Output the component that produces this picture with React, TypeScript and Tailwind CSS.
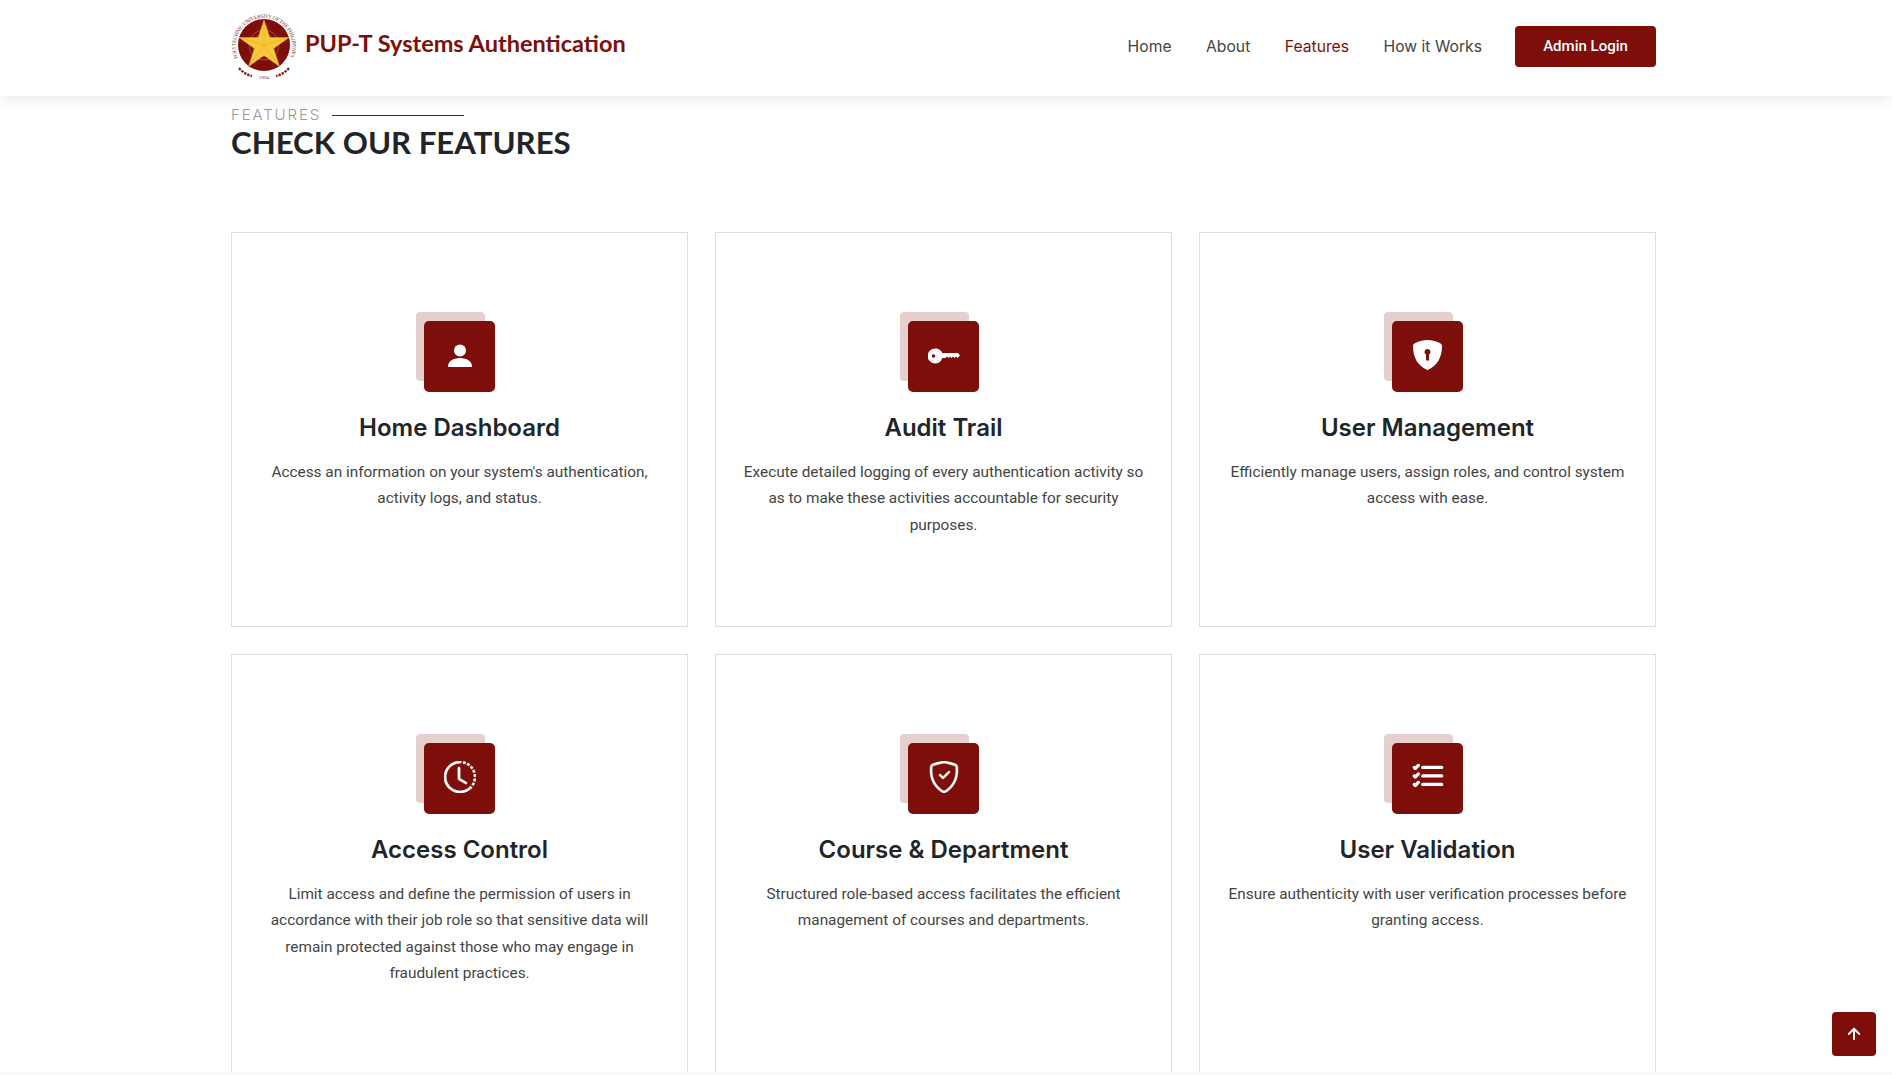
import React from 'react';
import { BsClockHistory, BsListCheck, BsShieldCheck } from 'react-icons/bs';
import { ArrowUp } from 'lucide-react';

function UserIcon() {
  return (
    <svg width="24" height="24" viewBox="0 0 24 24" fill="white" className="-mt-[3px]">
      <circle cx="12" cy="7.500" r="6" />
      <path d="M0 23.500c0-5 5-8.500 12-8.500s12 3.500 12 8.500c0 .3-.2.500-.5.500H.5c-.3 0-.5-.2-.5-.5z" />
    </svg>
  );
}

function KeyIcon() {
  return (
    <svg width="32" height="16" viewBox="0 0 32 16" fill="white" className="-mt-[2px]">
      <path
        fillRule="evenodd"
        d="M7.500 0.500a7.500 7.500 0 0 1 6.800 4.500H30l2 2.500-2.500 2.500-1.500-1.500-1.500 1.500-1.500-1.500-1.500 1.500-1.500-1.500-1.500 1.500-1.500-1.500-1.500 1.500h-3.200A7.500 7.500 0 1 1 7.500 0.500zM5.500 6.200a1.800 1.800 0 1 0 0 3.600 1.800 1.800 0 0 0 0-3.600z"
      />
    </svg>
  );
}

function ShieldKeyIcon() {
  return (
    <svg width="29" height="30" viewBox="0 0 29 30" fill="white" className="-mt-[3px]">
      <path
        fillRule="evenodd"
        d="M14.500 0C19 0 24 1.500 27.500 3.500c1 .6 1.500 1.400 1.500 2.500 0 11-4.500 20-14.500 24C4.500 26 0 17 0 6c0-1.100.5-1.900 1.500-2.500C5 1.500 10 0 14.500 0zM14.500 9a3 3 0 0 0-1.500 5.600V20.500h3v-5.900A3 3 0 0 0 14.500 9z"
      />
    </svg>
  );
}

function Seal() {
  return (
    <svg width="66" height="66" viewBox="0 0 66 66" className="shrink-0">
      <defs>
        <path id="sealArc" d="M7 44a28.500 28.500 0 1 1 52 0" fill="none" />
      </defs>
      <text fill="#7c2a2a" fontSize="5.200" fontFamily="Liberation Serif, serif" textLength="112">
        <textPath href="#sealArc">POLYTECHNIC UNIVERSITY OF THE PHILIPPINES</textPath>
      </text>
      <circle cx="33" cy="31" r="26" fill="#7e0e09" />
      <circle cx="33" cy="31" r="15" fill="none" stroke="#c98a5a" strokeWidth="0.5" />
      <circle cx="33" cy="31" r="11" fill="none" stroke="#c98a5a" strokeWidth="0.5" />
      <polygon
        points="33,6 38.800,23.500 58,23.500 42.600,34.500 48.500,52.500 33,41.500 17.500,52.500 23.400,34.500 8,23.500 27.200,23.500"
        fill="#f6c83a"
        stroke="#e8ad22"
        strokeWidth="0.5"
      />
      <path d="M33 6V31M8 23.500L33 31M58 23.500L33 31M17.500 52.500L33 31M48.500 52.500L33 31" stroke="#dca723" strokeWidth="0.5" fill="none" />
      <path d="M8 54q5 6 13 8M58 54q-5 6-13 8" stroke="#8a2020" strokeWidth="2.400" strokeDasharray="2.500 1" fill="none" />
      <text x="33" y="65" textAnchor="middle" fill="#7c2a2a" fontSize="5" fontFamily="Liberation Serif, serif">
        1904
      </text>
    </svg>
  );
}

const features = [
  {
    title: 'Home Dashboard',
    text: "Access an information on your system's authentication, activity logs, and status.",
    icon: <UserIcon />,
  },
  {
    title: 'Audit Trail',
    text: 'Execute detailed logging of every authentication activity so as to make these activities accountable for security purposes.',
    icon: <KeyIcon />,
  },
  {
    title: 'User Management',
    text: 'Efficiently manage users, assign roles, and control system access with ease.',
    icon: <ShieldKeyIcon />,
  },
  {
    title: 'Access Control',
    text: 'Limit access and define the permission of users in accordance with their job role so that sensitive data will remain protected against those who may engage in fraudulent practices.',
    icon: <BsClockHistory size={32} color="white" stroke="white" strokeWidth={0.4} className="-mt-[3px]" />,
  },
  {
    title: 'Course & Department',
    text: 'Structured role-based access facilitates the efficient management of courses and departments.',
    icon: <BsShieldCheck size={32} color="white" stroke="white" strokeWidth={0.25} className="-mt-[3px]" />,
  },
  {
    title: 'User Validation',
    text: 'Ensure authenticity with user verification processes before granting access.',
    icon: <BsListCheck size={34} color="white" stroke="white" strokeWidth={0.5} className="-mt-[3px]" />,
  },
];

export default function App() {
  return (
    <div className="relative h-[1075px] overflow-hidden bg-white font-['Roboto',sans-serif]">
      {/* Header */}
      <header className="relative z-10 h-[96px] bg-white pb-[3px] shadow-[0_2px_15px_rgba(0,0,0,0.1)]">
        <div className="ml-[231px] flex h-full w-[1425px] items-center justify-between">
          <div className="flex items-center gap-2">
            <Seal />
            <span className="-mt-[6px] font-['Lato',sans-serif] text-[23.500px] font-bold text-[#7e0e09]">
              PUP-T Systems Authentication
            </span>
          </div>
          <nav className="flex items-center gap-[33px] font-['Inter',sans-serif] text-[15.700px] text-[#444]">
            <div className="flex items-center gap-[34.500px]">
              <a>Home</a>
              <a>About</a>
              <a className="text-[#7e0e09]">Features</a>
              <a>How it Works</a>
            </div>
            <a className="flex h-[41px] w-[141px] items-center justify-center rounded bg-[#7e0e09] font-['Roboto',sans-serif] text-[15px] font-medium text-white">
              Admin Login
            </a>
          </nav>
        </div>
      </header>

      <main className="ml-[231px] w-[1425px]">
        {/* Section title */}
        <div className="pt-[10px]">
          <div className="flex items-center gap-[11px]">
            <span className="font-['Inter',sans-serif] text-[15px] font-light leading-[18px] tracking-[0.125em] text-[#999]">FEATURES</span>
            <span className="h-px w-[132px] bg-[#7e0e09]" />
          </div>
          <h2 className="-mt-px h-[38px] font-['Lato',sans-serif] text-[31.200px] font-bold leading-[38px] text-[#212529]">
            CHECK OUR FEATURES
          </h2>
        </div>

        {/* Cards */}
        <div className="mt-[71px] grid grid-cols-3 grid-rows-[395px_460px] gap-[27px]">
          {features.map((f) => (
            <div key={f.title} className="flex flex-col items-center border border-[#dedede] px-[26px] pt-[88px] text-center">
              <div className="flex h-[71px] w-[71px] items-center justify-center rounded-[5px] bg-[#7e0e09] shadow-[-9px_-10px_0_-1px_#e5cfcf]">
                {f.icon}
              </div>
              <h3 className="mt-[21px] font-['Inter',sans-serif] text-[24px] font-semibold leading-[29px] text-[#212529]">{f.title}</h3>
              <p className="mt-[17px] text-[15.360px] leading-[26.400px] text-[#444]">{f.text}</p>
            </div>
          ))}
        </div>
      </main>

      {/* Back to top */}
      <a className="absolute left-[1832px] top-[1012px] z-20 flex h-[44px] w-[44px] items-center justify-center rounded bg-[#7e0e09]">
        <ArrowUp size={18} color="white" strokeWidth={2.500} />
      </a>

      {/* Faint strip along the bottom edge */}
      <div className="absolute inset-x-0 bottom-0 h-[3px] bg-[#fafafa]" />
    </div>
  );
}
